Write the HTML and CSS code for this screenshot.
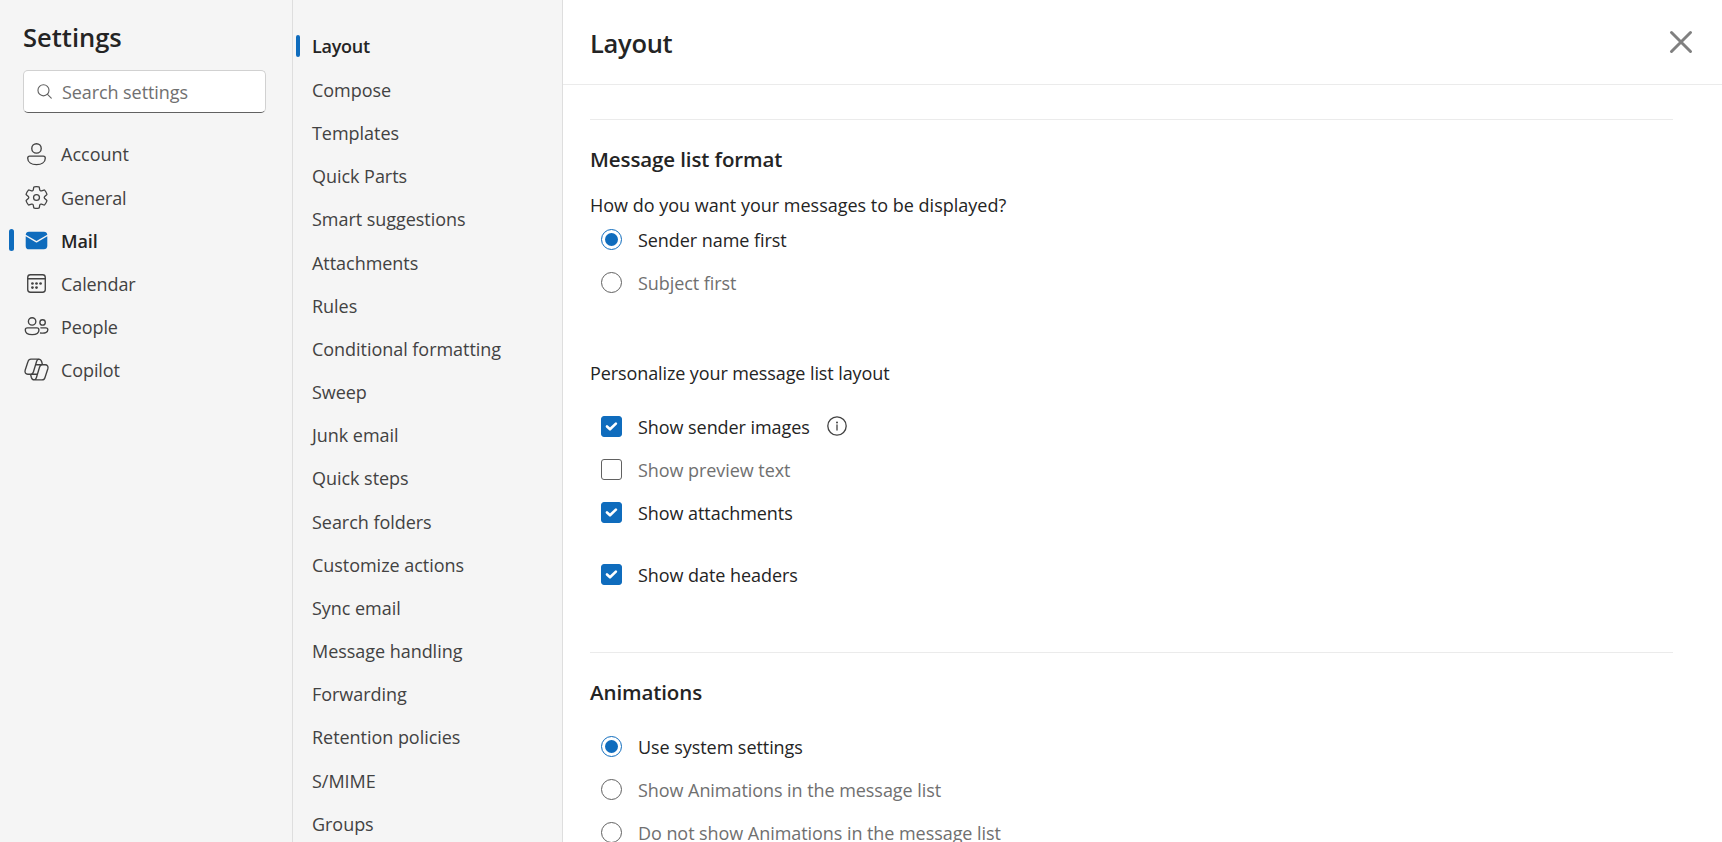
FILE: index.html
```html
<!DOCTYPE html>
<html lang="en">
<head>
<meta charset="utf-8">
<title>Settings</title>
<link rel="stylesheet" href="styles.css">
</head>
<body>
<div class="settings">
  <aside class="sidebar">
    <h1 class="sidebar-title">Settings</h1>
    <div class="search">
      <svg class="search-icon" viewBox="0 0 16 16"><circle cx="6.9" cy="6.7" r="5.9"/><path d="M11.2 11l4 4"/></svg>
      <span>Search settings</span>
    </div>
    <nav class="categories">
      <a class="category"><svg class="icon" viewBox="0 0 20 20"><circle cx="10" cy="5.500" r="3.5"/><path d="M5 11.200h10c.8 0 1.500.7 1.500 1.500 0 3.200-3 4.800-6.500 4.800S3.500 15.900 3.500 12.700c0-.8.7-1.500 1.500-1.500z"/></svg><span>Account</span></a>
      <a class="category"><svg class="icon" viewBox="0 0 20 20"><g transform="translate(10 10) scale(.95) translate(-10 -10)"><path d="M1.910 7.380A8.500 8.500 0 0 1 3.700 4.300a.5.5 0 0 1 .54-.13l1.920.68a1 1 0 0 0 1.320-.76l.36-2a.5.5 0 0 1 .4-.4 8.530 8.530 0 0 1 3.550 0c.2.04.35.2.38.4l.37 2a1 1 0 0 0 1.320.76l1.920-.68a.5.5 0 0 1 .54.13 8.500 8.500 0 0 1 1.780 3.080c.06.2 0 .4-.15.54l-1.560 1.320a1 1 0 0 0 0 1.520l1.560 1.320a.5.5 0 0 1 .15.54 8.500 8.500 0 0 1-1.780 3.080.5.5 0 0 1-.54.13l-1.920-.68a1 1 0 0 0-1.320.76l-.37 2a.5.5 0 0 1-.38.4 8.530 8.530 0 0 1-3.560 0 .5.5 0 0 1-.39-.4l-.36-2a1 1 0 0 0-1.320-.76l-1.920.68a.5.5 0 0 1-.54-.13 8.500 8.500 0 0 1-1.780-3.080.5.5 0 0 1 .15-.54l1.560-1.320a1 1 0 0 0 0-1.520L2.060 7.920a.5.5 0 0 1-.15-.54z"/><circle cx="10" cy="10" r="2.300"/></g></svg><span>General</span></a>
      <a class="category selected"><svg class="icon filled" viewBox="0 0 20 20"><path d="M18 6.870v7.130c0 1.380-1.120 2.500-2.500 2.500h-11A2.500 2.500 0 0 1 2 14V6.870l7.750 4.560c.15.1.35.1.5 0L18 6.870zM15.500 3.500A2.500 2.500 0 0 1 18 5.700l-8 4.720L2 5.700A2.500 2.500 0 0 1 4.350 3.500H15.500z"/></svg><span>Mail</span></a>
      <a class="category"><svg class="icon" viewBox="0 0 20 20"><rect x="3.500" y="3.500" width="13" height="13" rx="2"/><path d="M3.500 6.500h13"/><g class="dots"><circle cx="7" cy="10" r="1"/><circle cx="10" cy="10" r="1"/><circle cx="13" cy="10" r="1"/><circle cx="7" cy="13" r="1"/><circle cx="10" cy="13" r="1"/></g></svg><span>Calendar</span></a>
      <a class="category"><svg class="icon" viewBox="0 0 20 20"><circle cx="6.750" cy="6.250" r="2.750"/><circle cx="14.500" cy="7" r="2"/><path d="M3.200 11h7.100c.8 0 1.500.7 1.500 1.500 0 2.500-2.300 3.500-5 3.500s-5.100-1-5.100-3.500c0-.8.7-1.500 1.500-1.500zM13.200 11h3.700c.8 0 1.500.6 1.500 1.400 0 2-2.200 2.900-5.400 2.400"/></svg><span>People</span></a>
      <a class="category"><svg class="icon" viewBox="0 0 20 20"><path d="M14.400 6.400l-.6-2.300c-.3-1-1-1.800-2.300-1.800H5.900c-1.100 0-1.900.7-2.200 1.800L1.600 10.600c-.5 1.700.4 2.900 2 2.900h2.200c1 0 1.600-.6 1.900-1.600l2.400-8c.3-1 .8-1.600 1.700-1.600M5.600 13.600l.6 2.300c.3 1 1 1.800 2.300 1.800h5.600c1.100 0 1.900-.7 2.200-1.800l2.100-6.500c.5-1.700-.4-2.900-2-2.900h-2.200c-1 0-1.600.6-1.900 1.600l-2.400 8c-.3 1-.8 1.600-1.700 1.600M14.200 6.500h-4.600M5.800 13.500h4.600"/></svg><span>Copilot</span></a>
    </nav>
  </aside>
  <nav class="subnav">
    <a class="subitem selected">Layout</a>
    <a class="subitem">Compose</a>
    <a class="subitem">Templates</a>
    <a class="subitem">Quick Parts</a>
    <a class="subitem">Smart suggestions</a>
    <a class="subitem">Attachments</a>
    <a class="subitem">Rules</a>
    <a class="subitem">Conditional formatting</a>
    <a class="subitem">Sweep</a>
    <a class="subitem">Junk email</a>
    <a class="subitem">Quick steps</a>
    <a class="subitem">Search folders</a>
    <a class="subitem">Customize actions</a>
    <a class="subitem">Sync email</a>
    <a class="subitem">Message handling</a>
    <a class="subitem">Forwarding</a>
    <a class="subitem">Retention policies</a>
    <a class="subitem">S/MIME</a>
    <a class="subitem">Groups</a>
  </nav>
  <main class="panel">
    <header class="panel-header">
      <h2 class="panel-title">Layout</h2>
      <svg class="close" viewBox="0 0 24 24"><path d="M2.500 2.500l19 19M21.500 2.500l-19 19"/></svg>
    </header>
    <section class="section format">
      <h3 class="section-title">Message list format</h3>
      <p class="prompt">How do you want your messages to be displayed?</p>
      <div class="option"><span class="radio on"></span><span>Sender name first</span></div>
      <div class="option off"><span class="radio"></span><span>Subject first</span></div>
      <p class="prompt personalize">Personalize your message list layout</p>
      <div class="option"><span class="box on"><svg viewBox="0 0 12 12"><path d="M2.400 6l2.400 2.200 4.700-4.500"/></svg></span><span>Show sender images</span>
        <svg class="info" viewBox="0 0 20 20"><circle cx="10" cy="10" r="9.200"/><path d="M10 9v5"/><circle class="tittle" cx="10" cy="6.500" r="1"/></svg></div>
      <div class="option off"><span class="box"></span><span>Show preview text</span></div>
      <div class="option"><span class="box on"><svg viewBox="0 0 12 12"><path d="M2.400 6l2.400 2.200 4.700-4.500"/></svg></span><span>Show attachments</span></div>
      <div class="option dates"><span class="box on"><svg viewBox="0 0 12 12"><path d="M2.400 6l2.400 2.200 4.700-4.500"/></svg></span><span>Show date headers</span></div>
    </section>
    <section class="section animations">
      <h3 class="section-title">Animations</h3>
      <div class="option"><span class="radio on"></span><span>Use system settings</span></div>
      <div class="option off"><span class="radio"></span><span>Show Animations in the message list</span></div>
      <div class="option off"><span class="radio"></span><span>Do not show Animations in the message list</span></div>
    </section>
  </main>
</div>
</body>
</html>
```
FILE: styles.css
```css
* { box-sizing: border-box; }
body {
  margin: 0;
  overflow: hidden;
  font: 18px/24px "Segoe UI", "Open Sans", "Noto Sans", sans-serif;
  color: #242424;
  background: #fff;
}
h1, h2, h3, p { margin: 0; }
svg { flex: none; fill: none; stroke: currentColor; stroke-linecap: round; stroke-linejoin: round; }
.settings { display: grid; grid-template-columns: 293px 270px 1fr; height: 842px; overflow: hidden; }

.sidebar { background: #f5f5f5; border-right: 1px solid #dedede; padding-top: 19px; }
.sidebar-title { margin-left: 23px; font-size: 25.5px; line-height: 36px; font-weight: 600; }
.search {
  display: flex; align-items: center; gap: 10px;
  width: 243px; height: 43px; margin: 15px 0 0 23px; padding-left: 13px;
  border: 1px solid #d1d1d1; border-bottom-color: #616161; border-radius: 5px;
  background: #fff; color: #707070; letter-spacing: -0.08px;
}
.search-icon { width: 15px; height: 15px; stroke-width: 1.2; color: #616161; }
.categories { margin-top: 19px; }
.category {
  position: relative; display: flex; align-items: center; gap: 11px;
  height: 43.1px; padding-left: 23px; color: #424242; letter-spacing: -0.1px;
}
.category:first-child { height: 44px; letter-spacing: 0; }
.icon { width: 27px; height: 27px; stroke-width: 1; }
.icon.filled { fill: #0f6cbd; stroke: none; }
.dots { fill: currentColor; stroke: none; }
.selected { font-weight: 600; color: #242424; }
.selected::before {
  content: ""; position: absolute; top: 10px; left: 9px;
  width: 5px; height: 22px; border-radius: 3px; background: #0f6cbd;
}

.subnav { background: #f5f5f5; border-right: 1px solid #dedede; padding-top: 25px; }
.subitem { position: relative; display: block; height: 43.17px; padding-left: 19px; line-height: 43.17px; color: #424242; letter-spacing: -0.04px; }
.subitem.selected { height: 44px; color: #242424; letter-spacing: -0.25px; }
.subitem.selected::before { top: 10px; left: 3px; width: 4px; border-radius: 2px; }

.panel { overflow: hidden; }
.panel-header {
  display: flex; align-items: center; justify-content: space-between;
  height: 85px; padding: 0 29px 0 27px; border-bottom: 1px solid #ebebeb;
}
.panel-title { padding-top: 2px; font-size: 25.5px; line-height: 36px; font-weight: 600; letter-spacing: -0.3px; }
.close { width: 24px; height: 24px; stroke-width: 3; color: #808080; }
.section { margin: 0 49px 0 27px; border-top: 1px solid #ebebeb; }
.section-title { font-size: 20.5px; line-height: 28px; font-weight: 600; letter-spacing: -0.1px; }
.format { margin-top: 34px; height: 533px; padding-top: 25px; }
.prompt { margin-top: 20px; }
.option { display: flex; align-items: center; height: 43.1px; padding-left: 11px; gap: 16px; letter-spacing: -0.06px; }
.prompt + .option { margin-top: 1px; }
.off { color: #707070; }
.personalize { margin-top: 57px; letter-spacing: -0.1px; }
.personalize + .option { margin-top: 20px; }
.dates { margin-top: 19px; }
.radio, .box { flex: none; width: 21px; height: 21px; border: 1px solid #616161; }
.radio { position: relative; margin-bottom: 1px; border-radius: 50%; }
.radio.on { border-color: #0f6cbd; }
.radio.on::after { content: ""; position: absolute; inset: 3px; border-radius: 50%; background: #0f6cbd; }
.box { display: grid; place-items: center; margin-bottom: 1px; border-radius: 3px; }
.box.on { background: #0f6cbd; border-color: #0f6cbd; color: #fff; }
.box svg { width: 15px; height: 15px; stroke-width: 2.1; }
.info { width: 20px; height: 20px; margin: 0 0 2px 1px; stroke-width: 1.3; color: #424242; }
.tittle { fill: currentColor; stroke: none; }
.animations { padding-top: 25px; }
.animations .section-title { margin-bottom: 19px; }
```
